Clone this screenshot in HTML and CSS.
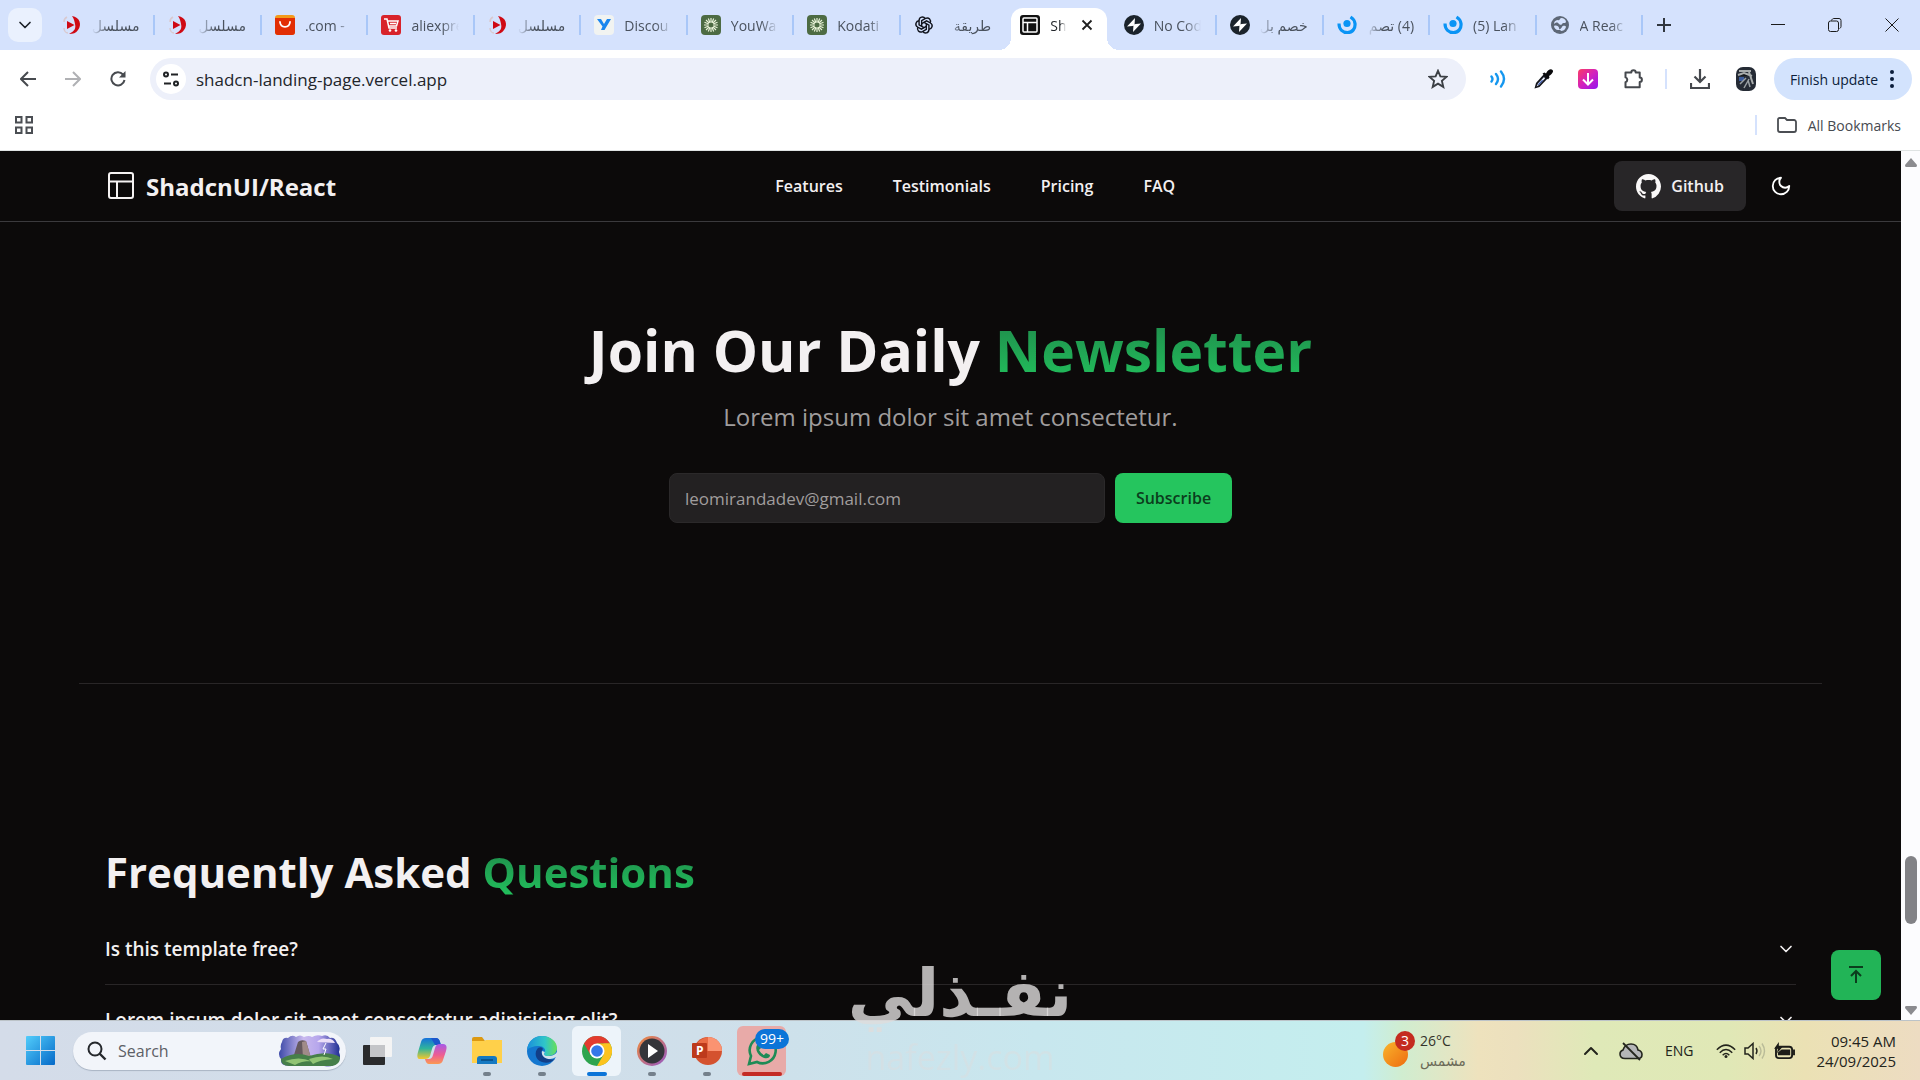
FILE: index.html
```html
<!DOCTYPE html>
<html lang="en">
<head>
<meta charset="utf-8">
<title>Shadcn - Landing template</title>
<link rel="stylesheet" href="styles.css">
</head>
<body>
<svg class="defs" aria-hidden="true">
  <symbol id="fav-play" viewBox="0 0 20 20"><path d="M5 2c-2 1-3 3-3 5M2 13c0 3 2 5 4 5" fill="none" stroke="#d9c9cf" stroke-width="1.500"/><path d="M10 1c8 1 10 9 6 14-2 3-5 4-9 4 6-3 7-6 6-10-.5-3-1-5-3-8z" fill="#cf0a14"/><path d="M5 6 12.500 10 5 14z" fill="#cf0a14"/></symbol>
  <symbol id="fav-green" viewBox="0 0 20 20"><rect width="20" height="20" rx="4" fill="#4d6b43"/><g stroke="#e9f2d8" stroke-width="1.200"><path d="M10 3v4.500M10 12.500V17M3 10h4.500M12.500 10H17M5 5l3.200 3.200M11.800 11.800 15 15M15 5l-3.200 3.200M8.200 11.800 5 15M7.300 3.500l1.700 4.200M11 12.300l1.700 4.200M12.700 3.500 11 7.700M9 12.300l-1.700 4.200M3.500 7.300 7.700 9M12.300 11l4.200 1.700M3.500 12.700 7.700 11M12.300 9l4.200-1.700"/></g></symbol>
  <symbol id="fav-bolt" viewBox="0 0 20 20"><circle cx="10" cy="10" r="10" fill="#1b232b"/><path d="M11 3 3 11.500l5.500-.5 2-1zM9 17l8-8.500-5.500.5-2 1z" fill="#fff"/></symbol>
  <symbol id="fav-ring" viewBox="0 0 20 20"><circle cx="10" cy="8.500" r="3.600" fill="#0a94f5"/><path d="M2 8.500c0 6 4 9 8.500 9 5 0 8-4 7.500-9-.4-3-2-5-4.500-6.500" fill="none" stroke="#0a94f5" stroke-width="3.200"/></symbol>
  <symbol id="chevron" viewBox="0 0 24 24"><path d="m6 9 6 6 6-6" fill="none" stroke="currentColor" stroke-width="2" stroke-linecap="round" stroke-linejoin="round"/></symbol>
</svg>

<header class="tabstrip">
  <button class="tab-search" aria-label="Search tabs"><svg width="20" height="20"><use href="#chevron"/></svg></button>
  <div class="tabs" role="tablist">
    <button class="tab" role="tab"><svg width="20" height="20"><use href="#fav-play"/></svg><span class="tab-label rtl" dir="rtl">مسلسل</span></button>
    <button class="tab" role="tab"><svg width="20" height="20"><use href="#fav-play"/></svg><span class="tab-label rtl" dir="rtl">مسلسل</span></button>
    <button class="tab" role="tab"><svg width="20" height="20" viewBox="0 0 20 20"><rect width="20" height="20" rx="3" fill="#f39a1b"/><path d="M0 3h20v14a3 3 0 0 1-3 3H3a3 3 0 0 1-3-3z" fill="#e22e05"/><path d="M5 7c.5 6.500 9.500 6.500 10 0" fill="none" stroke="#fff" stroke-width="1.800" stroke-linecap="round"/></svg><span class="tab-label">.com -</span></button>
    <button class="tab" role="tab"><svg width="20" height="20" viewBox="0 0 20 20"><rect width="20" height="20" rx="3" fill="#d8232b"/><path d="M3 4h3l2 9h8M7 6h10l-1.500 5H8M9 8.500h6" fill="none" stroke="#fff" stroke-width="1.500"/><circle cx="9" cy="15.500" r="1.300" fill="#fff"/><circle cx="15" cy="15.500" r="1.300" fill="#fff"/></svg><span class="tab-label">aliexpre</span></button>
    <button class="tab" role="tab"><svg width="20" height="20"><use href="#fav-play"/></svg><span class="tab-label rtl" dir="rtl">مسلسل</span></button>
    <button class="tab" role="tab"><svg width="20" height="20" viewBox="0 0 20 20"><rect width="20" height="20" rx="4" fill="#f1f3f1"/><path d="M3 4h4l3 5 3-5h4l-6.500 11H7l1.500-3.500z" fill="#1a86ee"/></svg><span class="tab-label">Discou</span></button>
    <button class="tab" role="tab"><svg width="20" height="20"><use href="#fav-green"/></svg><span class="tab-label">YouWa</span></button>
    <button class="tab" role="tab"><svg width="20" height="20"><use href="#fav-green"/></svg><span class="tab-label">Kodati</span></button>
    <button class="tab" role="tab"><svg width="20" height="20" viewBox="0 0 24 24"><g fill="none" stroke="#10131c" stroke-width="1.700"><path id="petal" d="M9.200 13.600V6.800l4.600-2.700c4-2 7.200 2 5.500 5.400"/><use href="#petal" transform="rotate(60 12 12)"/><use href="#petal" transform="rotate(120 12 12)"/><use href="#petal" transform="rotate(180 12 12)"/><use href="#petal" transform="rotate(240 12 12)"/><use href="#petal" transform="rotate(300 12 12)"/></g></svg><span class="tab-label rtl" dir="rtl">طريقة</span></button>
    <button class="tab active" role="tab" aria-selected="true"><svg width="20" height="20" viewBox="0 0 20 20"><rect width="20" height="20" rx="3" fill="#111"/><rect x="3" y="3" width="14" height="14" rx="1" fill="none" stroke="#fff" stroke-width="1.500"/><path d="M3 7.500h14M7.500 7.500V17" stroke="#fff" stroke-width="1.500"/></svg><span class="tab-label">Sha</span><svg class="close" width="12" height="12" viewBox="0 0 12 12"><path d="m1.500 1.500 9 9M10.500 1.500l-9 9" stroke="#1f1f1f" stroke-width="1.800"/></svg></button>
    <button class="tab" role="tab"><svg width="20" height="20"><use href="#fav-bolt"/></svg><span class="tab-label">No Cod</span></button>
    <button class="tab" role="tab"><svg width="20" height="20"><use href="#fav-bolt"/></svg><span class="tab-label rtl" dir="rtl">خصم بل</span></button>
    <button class="tab" role="tab"><svg width="20" height="20"><use href="#fav-ring"/></svg><span class="tab-label rtl" dir="rtl">(4) تصم</span></button>
    <button class="tab" role="tab"><svg width="20" height="20"><use href="#fav-ring"/></svg><span class="tab-label">(5) Lan</span></button>
    <button class="tab" role="tab"><svg width="20" height="20" viewBox="0 0 20 20"><circle cx="10" cy="10" r="9" fill="#5d6776"/><path d="M11 3c3 0 5 2 5 4-1 2-3 0-4 2s-3 0-4-1-3 0-4 1c0-3 2-4 4-4 2 1 1-1 3-2zM4 11c2-1 5 0 5 2s2 1 3-1 4-1 4 0c-1 3-3 4-5 4-1-2-2-1-3-1-2 0-4-2-4-4z" fill="#d5e2fd"/></svg><span class="tab-label">A Reac</span></button>
  </div>
  <button class="new-tab" aria-label="New tab"><svg width="14" height="14" viewBox="0 0 14 14"><path d="M7 0v14M0 7h14" stroke="#30363f" stroke-width="2"/></svg></button>
  <div class="window-controls">
    <button aria-label="Minimize"><svg width="14" height="14" viewBox="0 0 14 14"><path d="M0 6.500h14" stroke="#1b1b1b"/></svg></button>
    <button aria-label="Restore"><svg width="14" height="14" viewBox="0 0 14 14"><rect x=".5" y="3" width="10" height="10.500" rx="2" fill="none" stroke="#1b1b1b"/><path d="M3.500 2.500C4 1 5 .5 6 .5h5a2 2 0 0 1 2 2v6c0 1-1 2-1.500 2" fill="none" stroke="#1b1b1b"/></svg></button>
    <button aria-label="Close window"><svg width="14" height="14" viewBox="0 0 14 14"><path d="m.5.5 13 13M13.500.5l-13 13" stroke="#1b1b1b"/></svg></button>
  </div>
</header>

<div class="toolbar">
  <div class="nav-buttons">
    <button aria-label="Back"><svg width="16" height="16" viewBox="0 0 16 16"><path d="M16 8H1.500M8 1 1 8l7 7" fill="none" stroke="#474a4f" stroke-width="2"/></svg></button>
    <button aria-label="Forward"><svg width="16" height="16" viewBox="0 0 16 16"><path d="M0 8h14.500M8 1l7 7-7 7" fill="none" stroke="#b0b1b4" stroke-width="2"/></svg></button>
    <button aria-label="Reload"><svg width="16" height="16" viewBox="0 0 16 16"><path d="M14.500 9A6.600 6.600 0 1 1 13 3.500l1.500 1.700" fill="none" stroke="#474a4f" stroke-width="2"/><path d="M15.500 0v6.500H9z" fill="#474a4f"/></svg></button>
  </div>
  <div class="omnibox">
    <button class="site-info" aria-label="Site information"><svg width="16" height="16" viewBox="0 0 16 16"><g fill="none" stroke="#202225" stroke-width="2"><circle cx="3" cy="3.500" r="2"/><path d="M8 3.500h7M1 12.500h7"/><circle cx="13" cy="12.500" r="2"/></g></svg></button>
    <input type="text" aria-label="Address" value="shadcn-landing-page.vercel.app">
    <button aria-label="Bookmark this tab"><svg width="20" height="20" viewBox="0 0 20 20"><path d="m10 1.800 2.400 5.600 6.100.5-4.600 4 1.400 6-5.300-3.200-5.300 3.200 1.400-6-4.600-4 6.100-.5z" fill="none" stroke="#3c4045" stroke-width="1.900"/></svg></button>
  </div>
  <div class="extensions">
    <button aria-label="Sound waves"><svg width="18" height="18" viewBox="0 0 18 18"><path d="M1.500 6.500q2 2.500 0 5M6 4q4 5 0 10M11 1.500q6 7.500 0 15" fill="none" stroke="#1597ef" stroke-width="2.400" stroke-linecap="round"/></svg></button>
    <button aria-label="Color picker"><svg width="20" height="20" viewBox="0 0 20 20"><path d="m11 5 4 4-8.500 9-5 1.500L3 14z" fill="#11131a"/><path d="m11 8-6 6.500-1.500 3L6 16l6-6.500z" fill="#e8eefc"/><path d="m8.500 11.500-4 4.500 1.500-.3L10.500 11z" fill="#2f4ea8"/><path d="m9.500 4.500 2-1 1.500 1c2-4 5-5 6.500-3.500S19 5 16 7l.5 1.500-1.500 2z" fill="#0a0a0c"/></svg></button>
    <button aria-label="Downloader"><svg width="20" height="20" viewBox="0 0 20 20"><defs><linearGradient id="dl" x1="0" y1="0" x2="1" y2="1"><stop offset="0" stop-color="#fb3d63"/><stop offset=".5" stop-color="#d321bd"/><stop offset="1" stop-color="#9316f0"/></linearGradient></defs><rect width="20" height="20" rx="4" fill="url(#dl)"/><path d="M10 4v11M5 10.500l5 5 5-5" fill="none" stroke="#fff" stroke-width="2"/></svg></button>
    <button aria-label="Extensions"><svg width="22" height="22" viewBox="0 0 22 22"><path d="M2.500 4.500h5.800a2.200 2.200 0 0 1 4.400 0h4v5a2.200 2.200 0 0 1 0 4.400v5.300H2.500v-5a2.500 2.500 0 0 0 0-4.800z" fill="none" stroke="#45484d" stroke-width="2" stroke-linejoin="round"/></svg></button>
  </div>
  <span class="divider"></span>
  <button aria-label="Downloads"><svg width="20" height="20" viewBox="0 0 20 20"><path d="M10 0v12M4.500 7.500 10 13l5.500-5.500M1 14v5h18v-5" fill="none" stroke="#45484d" stroke-width="2.200"/></svg></button>
  <button class="avatar" aria-label="Profile"><svg width="20" height="24" viewBox="0 0 20 24"><rect width="20" height="24" rx="7" fill="#252b35"/><path d="M3 4h12M2 8l6-2 8 3M13 5l4 12" stroke="#a9adad" stroke-width="2"/><path d="M3 10h5v4H3z" fill="#3c5c9c"/><path d="m4 17 6-6M8 21l5-9M14 20l-2-7" stroke="#9aa0a4" stroke-width="1.500"/></svg></button>
  <button class="update">Finish update<svg width="4" height="20" viewBox="0 0 4 20"><g fill="#0b1d3a"><circle cx="2" cy="3" r="2"/><circle cx="2" cy="10" r="2"/><circle cx="2" cy="17" r="2"/></g></svg></button>
</div>

<div class="bookmarks">
  <button aria-label="Apps"><svg width="18" height="18" viewBox="0 0 18 18"><g fill="none" stroke="#4b4e53" stroke-width="2"><path d="M1 1h5.500v5.500H1zM11.500 1H17v5.500h-5.500zM1 11.500h5.500V17H1zM11.500 11.500H17V17h-5.500z"/></g></svg></button>
  <button class="all-bookmarks"><svg width="20" height="16" viewBox="0 0 20 16"><path d="M1 2.500V13a2 2 0 0 0 2 2h14a2 2 0 0 0 2-2V5a2 2 0 0 0-2-2h-7L8 1H2.500A1.500 1.500 0 0 0 1 2.500z" fill="none" stroke="#4b4e53" stroke-width="1.800"/></svg>All Bookmarks</button>
</div>

<div class="viewport">
  <div class="page">
    <div class="site-header">
      <a class="brand" href="#"><svg width="26" height="28" viewBox="0 0 26 28"><g fill="none" stroke="#f5f2f2" stroke-width="2"><rect x="1" y="1" width="24" height="25" rx="2"/><path d="M1 9.500h24M9 9.500V26"/></g></svg>ShadcnUI/React</a>
      <nav class="site-nav"><a href="#">Features</a><a href="#">Testimonials</a><a href="#">Pricing</a><a href="#">FAQ</a></nav>
      <div class="site-actions">
        <a class="github" href="#"><svg width="25" height="25" viewBox="0 0 16 16"><path fill="#faf8f8" d="M8 0C3.580 0 0 3.580 0 8c0 3.540 2.290 6.530 5.470 7.590.4.070.55-.17.55-.38 0-.19-.01-.82-.01-1.490-2.010.37-2.530-.49-2.690-.94-.09-.23-.48-.94-.82-1.130-.28-.15-.68-.52-.01-.53.63-.01 1.080.58 1.230.82.72 1.210 1.870.87 2.330.66.070-.52.280-.87.510-1.070-1.780-.2-3.640-.89-3.640-3.950 0-.87.310-1.590.82-2.150-.08-.2-.36-1.020.08-2.120 0 0 .67-.21 2.200.82.640-.18 1.320-.27 2-.27s1.360.09 2 .27c1.530-1.040 2.200-.82 2.200-.82.440 1.100.16 1.920.08 2.120.51.560.82 1.270.82 2.150 0 3.070-1.870 3.750-3.650 3.950.29.25.54.73.54 1.480 0 1.070-.01 1.930-.01 2.200 0 .21.15.46.55.38A8.010 8.010 0 0 0 16 8c0-4.420-3.580-8-8-8z"/></svg>Github</a>
        <button class="theme" aria-label="Toggle theme"><svg width="22" height="22" viewBox="0 0 24 24"><path d="M12 3a6 6 0 0 0 9 9 9 9 0 1 1-9-9Z" fill="none" stroke="#fff" stroke-width="2" stroke-linecap="round" stroke-linejoin="round"/></svg></button>
      </div>
    </div>
    <section class="newsletter">
      <h1>Join Our Daily <span class="accent">Newsletter</span></h1>
      <p>Lorem ipsum dolor sit amet consectetur.</p>
      <form class="signup"><input type="email" aria-label="Email" placeholder="leomirandadev@gmail.com"><button type="button">Subscribe</button></form>
    </section>
    <hr>
    <section class="faq">
      <h2>Frequently Asked <span class="accent">Questions</span></h2>
      <button class="question">Is this template free?<svg width="20" height="20"><use href="#chevron"/></svg></button>
      <button class="question">Lorem ipsum dolor sit amet consectetur adipisicing elit?<svg width="20" height="20"><use href="#chevron"/></svg></button>
    </section>
    <button class="to-top" aria-label="Scroll to top"><svg width="20" height="20" viewBox="0 0 20 20"><path d="M3 2h14M10 18V6M5 11l5-5 5 5" fill="none" stroke="#0b3d1d" stroke-width="2"/></svg></button>
  </div>
  <div class="scrollbar">
    <svg width="12" height="9" viewBox="0 0 12 9"><path d="M6 0 12 7q0 2-1 2H1q-1 0-1-2z" fill="#8b8b8f"/></svg>
    <span class="thumb"></span>
    <svg width="12" height="9" viewBox="0 0 12 9"><path d="M6 9 0 2Q0 0 1 0h10q1 0 1 2z" fill="#8b8b8f"/></svg>
  </div>
</div>

<footer class="taskbar">
  <button class="start" aria-label="Start"><svg width="29" height="29" viewBox="0 0 29 29"><defs><linearGradient id="win" x1="0" y1="0" x2="1" y2="1"><stop offset="0" stop-color="#52cdfb"/><stop offset="1" stop-color="#0569c8"/></linearGradient></defs><path d="M0 1q0-1 1-1h13v14H0zM15 0h13q1 0 1 1v13H15zM0 15h14v14H1q-1 0-1-1zM15 15h14v13q0 1-1 1H15z" fill="url(#win)"/></svg></button>
  <label class="search"><svg width="20" height="20" viewBox="0 0 20 20"><circle cx="8" cy="8" r="6.500" fill="none" stroke="#25282c" stroke-width="2"/><path d="m12.500 12.500 6 6" stroke="#25282c" stroke-width="2.400"/></svg><input type="text" placeholder="Search" aria-label="Search">
    <svg width="62" height="32" viewBox="0 0 62 32"><defs><linearGradient id="sky" x1="0" x2="1"><stop offset="0" stop-color="#3d4aa8"/><stop offset=".4" stop-color="#c9b9ee"/><stop offset=".65" stop-color="#b6a6ec"/><stop offset="1" stop-color="#1f2e93"/></linearGradient></defs><path d="M3 7q1-5 6-4 4-4 8-1 4-3 8 0 5-2 8 0 5-3 10-1 5-2 8 2 5-1 7 5 4 3 2 9 3 8-3 11-4 5-12 3H10Q1 31 2 24q-4-5 0-10-1-4 1-7z" fill="url(#sky)"/><path d="m14 23 5-16q3-3 8-1l5 17z" fill="#65595e"/><path d="m24 23-1-16 4-1 5 17z" fill="#a08b88"/><path d="M2 24q14-8 28-3 18-6 31 1 0 8-8 9H10Q2 31 2 24z" fill="#467f49"/><path d="M6 26q14-5 26 0-10 0-16 4M30 24q14-5 24 0-14 1-20 5" fill="#91c474"/><path d="M38 7q4-5 10-3 5-1 8 4z" fill="#ecdff8"/><path d="m47 8-3 6h3l-2 6" fill="none" stroke="#fff"/></svg></label>
  <div class="apps">
    <button class="app" aria-label="Task view"><svg width="30" height="30" viewBox="0 0 30 30"><rect x="1" y="9" width="22" height="20" rx="1" fill="#2a2b2d"/><rect x="8" y="1" width="22" height="20" rx="1" fill="#f4f4f4"/><path d="M8 9h15v12H8z" fill="#c4c5c8"/></svg></button>
    <button class="app" aria-label="Copilot"><svg width="30" height="30" viewBox="0 0 30 30"><defs><linearGradient id="cpa" x1="0" y1="0" x2="0" y2="1"><stop offset="0" stop-color="#1671dc"/><stop offset=".5" stop-color="#2fb49b"/><stop offset="1" stop-color="#f5c82c"/></linearGradient><linearGradient id="cpb" x1="0" y1="0" x2="0" y2="1"><stop offset="0" stop-color="#a55ae8"/><stop offset=".55" stop-color="#ee5d92"/><stop offset="1" stop-color="#fb9a52"/></linearGradient></defs><path d="M9 2h10q3 0 4 4l1 3h-5q-3 0-4 4l-2 7q-1 3-5 3H3q-4 0-2-7L4 6q1-4 5-4z" fill="url(#cpa)"/><path d="M14 2h5q3 0 4 4l1 3h-6z" fill="#1c57cc"/><path d="M21 28H12q-3 0-4-5h4q3 0 4-4l2-7q1-4 5-4h3q5 0 3 7l-3 9q-1 4-5 4z" fill="url(#cpb)"/></svg></button>
    <button class="app running" aria-label="File Explorer"><svg width="30" height="30" viewBox="0 0 30 30"><path d="M0 3q0-2 2-2h8l3 4H0z" fill="#dc9912"/><path d="M0 5h12l2-1h16v23H0z" fill="#ffd04a"/><path d="M5 28v-5q0-3 3-3h14q3 0 3 3v5z" fill="#1579c2"/><path d="M9 24h12" stroke="#0b5590" stroke-width="2"/></svg></button>
    <button class="app running" aria-label="Edge"><svg width="30" height="30" viewBox="0 0 30 30"><defs><linearGradient id="edge" x1="0" y1="0" x2="1" y2="0"><stop offset="0" stop-color="#1a8fdc"/><stop offset=".6" stop-color="#30c6c8"/><stop offset="1" stop-color="#67df57"/></linearGradient></defs><circle cx="15" cy="15" r="15" fill="#1477cf"/><path d="M0 14C1 5 7 0 15 0c9 0 15 6 15 12 0 5-4 8-9 8-4 0-5-2-3-4 1-3-2-6-6-6-6 0-10 2-12 4z" fill="url(#edge)"/><path d="M11 12c-4 4-3 12 4 14 5 2 10 0 13-3-3 1-9 1-12-3-2-3-2-5 0-7-1-2-3-2-5-1z" fill="#123f88"/><path d="M15 15c-1 5 3 8 8 8 2 0 4-1 6-2l2-1v-6c-2 5-6 6-10 6-4 0-5-2-3-4z" fill="#d1e1eb"/></svg></button>
    <button class="app running current" aria-label="Chrome"><svg width="30" height="30" viewBox="0 0 30 30"><circle cx="15" cy="15" r="15" fill="#2da44e"/><path d="M2 7.500A15 15 0 0 1 28 7.500H15L8.500 18.800z" fill="#e33b2e"/><path d="M28 7.500A15 15 0 0 1 15 30l6.500-11.200V7.500z" fill="#fcc31e"/><path d="M15 7.500h13l-7 9z" fill="#fcc31e"/><circle cx="15" cy="15" r="7.500" fill="#fff"/><circle cx="15" cy="15" r="5.800" fill="#3578e8"/></svg></button>
    <button class="app running" aria-label="Media Player"><svg width="30" height="30" viewBox="0 0 30 30"><defs><linearGradient id="med" x1="0" y1="0" x2="1" y2="1"><stop offset="0" stop-color="#f28b38"/><stop offset="1" stop-color="#9357c7"/></linearGradient></defs><circle cx="15" cy="15" r="15" fill="url(#med)"/><circle cx="15" cy="15" r="12.500" fill="#34353a"/><path d="m11 8 10 7-10 7z" fill="#fff"/></svg></button>
    <button class="app running" aria-label="PowerPoint"><svg width="30" height="30" viewBox="0 0 30 30"><circle cx="16" cy="15" r="14" fill="#d4522f"/><path d="M16 1a14 14 0 0 1 14 14H16z" fill="#fb9371"/><path d="M16 1v14H3Q4 3 16 1z" fill="#ea6c45"/><rect y="7" width="15" height="15" rx="1" fill="#bd3a1c"/><text x="4" y="19" class="ppt">P</text></svg></button>
    <button class="app alert" aria-label="WhatsApp"><svg width="32" height="32" viewBox="0 0 32 32"><path d="M3 29 5 21A13 13 0 1 1 11 27z" fill="none" stroke="#1f8b56" stroke-width="2.600"/><path d="M11 10c1-2 3-1 3 1l1 2-2 2q2 4 5 5l2-2 4 2c0 4-5 4-8 2-5-3-7-8-5-12z" fill="#1f8b56"/></svg><span class="badge">99+</span></button>
  </div>
  <button class="weather"><span class="sun"><span class="count">3</span></span><span class="weather-text"><span>26°C</span><span class="cond" lang="ar">مشمس</span></span></button>
  <div class="tray">
    <button aria-label="Show hidden icons"><svg class="flip" width="24" height="24"><use href="#chevron"/></svg></button>
    <button aria-label="Cloud sync off"><svg width="24" height="20" viewBox="0 0 24 20"><path d="M6 17.500q-5 0-5-4.500 0-3 3-4Q6 3 12 3t7 6q4 1 4 4.500 0 4-4 4z" fill="#b5b6b8" stroke="#23251d" stroke-width="1.600"/><path d="m4 2 17 17" stroke="#23251d" stroke-width="1.800"/></svg></button>
    <button class="lang">ENG</button>
    <button class="status" aria-label="Network, sound and battery">
      <svg width="20" height="16" viewBox="0 0 24 18"><g fill="none" stroke="#23241c" stroke-width="1.800"><path d="M1 7.500q11-11 22 0M4.500 11q7.500-7.500 15 0M8 14q4-4 8 0"/></g><circle cx="12" cy="15.500" r="1.800" fill="#23241c"/></svg>
      <svg width="22" height="18" viewBox="0 0 22 18"><path d="M1 6h3l5-4.500v15L4 12H1z" fill="none" stroke="#23241c" stroke-width="1.500"/><path d="M12 6q2 3 0 6" fill="none" stroke="#23241c" stroke-width="1.400"/><path d="M15 4q4 5 0 10M18 1.500q5 7.500 0 15" fill="none" stroke="#b9bb98" stroke-width="1.400"/></svg>
      <svg width="22" height="18" viewBox="0 0 23 19"><rect x="2" y="5" width="17" height="12" rx="3" fill="none" stroke="#1c1c18" stroke-width="2"/><path d="M8 8h9v6H4v-3z" fill="#1c1c18"/><path d="M20 8h2v6h-2zM5 0 0 7h4l-1 5 6-7H5z" fill="#1c1c18"/></svg>
    </button>
    <button class="clock"><span>09:45 AM</span><span>24/09/2025</span></button>
  </div>
</footer>
<div class="watermark" aria-hidden="true"><span class="wm-ar" lang="ar" dir="rtl">نفـذلي</span><span class="wm-en">nafezly.com</span></div>
</body>
</html>
```
FILE: styles.css
```css
* { box-sizing: border-box; }
body {
  margin: 0;
  height: 100vh;
  display: flex;
  flex-direction: column;
  overflow: hidden;
  position: relative;
  background: #fff;
  font-family: "Open Sans", "Noto Sans", "DejaVu Sans", sans-serif;
}
button { border: 0; padding: 0; background: none; font: inherit; color: inherit; display: flex; align-items: center; justify-content: center; }
input { border: 0; padding: 0; background: none; font: inherit; outline: 0; min-width: 0; }
a { color: inherit; text-decoration: none; }
svg { display: block; flex: none; }
.defs { position: absolute; width: 0; height: 0; }

/* Tab strip */
.tabstrip { flex: none; height: 50px; display: flex; align-items: center; background: #d5e2fd; }
.tab-search { width: 34px; height: 34px; margin: 0 7px 0 8px; border-radius: 10px; background: #eaf1fe; color: #1b2027; }
.tabs { flex: 1; display: flex; height: 50px; }
.tab { flex: 1 1 0; min-width: 0; height: 50px; padding: 0 16px 0 13px; gap: 10px; position: relative; font-size: 14px; color: #4a525e; justify-content: flex-start; }
.tab::after { content: ""; position: absolute; right: 0; top: 15px; width: 2px; height: 20px; background: #a9c7f8; }
.tab:has(+ .active)::after, .tab.active::after { background: none; }
.tab-label { flex: 1; overflow: hidden; white-space: nowrap; text-align: left; -webkit-mask-image: linear-gradient(to right, #000 65%, transparent); mask-image: linear-gradient(to right, #000 65%, transparent); }
.tab-label.rtl { text-align: right; -webkit-mask-image: linear-gradient(to left, #000 65%, transparent); mask-image: linear-gradient(to left, #000 65%, transparent); }
.tab.active { padding-right: 13px; color: #1f2328; }
.tab.active::before { content: ""; position: absolute; left: 4px; right: 4px; top: 8px; bottom: 0; background: #fff; border-radius: 12px 12px 0 0; }
.tab.active > * { position: relative; }
.tab.active::after { left: -8px; right: -8px; top: 38px; width: auto; height: 12px; background: radial-gradient(circle at 0 0, transparent 12px, #fff 12px) left / 12px 12px no-repeat, radial-gradient(circle at 100% 0, transparent 12px, #fff 12px) right / 12px 12px no-repeat; }
.tab .close { margin: 0 5px; }
.new-tab { width: 42px; height: 34px; }
.window-controls { display: flex; margin-left: 64px; }
.window-controls button { width: 57px; height: 50px; }

/* Toolbar */
.toolbar { flex: none; height: 58px; display: flex; align-items: center; padding: 0 8px 0 5px; }
.nav-buttons { display: flex; }
.nav-buttons button { width: 45px; height: 42px; }
.omnibox { flex: 1; height: 42px; margin-left: 10px; padding: 0 18px 0 6px; display: flex; align-items: center; gap: 10px; background: #edf0fa; border-radius: 21px; }
.site-info { width: 30px; height: 30px; border-radius: 50%; background: #fff; }
.omnibox input { flex: 1; font-size: 17px; color: #22252a; }
.extensions { display: flex; gap: 25px; margin-left: 24px; }
.divider { width: 2px; height: 20px; margin: 0 23px 0 20px; background: #d5e2fd; }
.avatar { margin: 0 18px 0 26px; }
.update { height: 42px; padding: 0 18px 0 16px; gap: 12px; border-radius: 21px; background: #d3e3fd; font-size: 14px; color: #0b1d3a; }

/* Bookmarks bar */
.bookmarks { flex: none; height: 43px; padding: 0 19px 8px 15px; display: flex; align-items: center; justify-content: space-between; border-bottom: 1px solid #dfe3e3; }
.all-bookmarks { height: 20px; padding-left: 20px; gap: 11px; border-left: 2px solid #d5e2fd; font-size: 14px; color: #474a50; }

/* Page area */
.viewport { flex: 1; min-height: 0; display: flex; overflow: hidden; }
.page { flex: 1; min-width: 0; position: relative; overflow: hidden; background: #0c0a0a; color: #f3f0f1; }
.site-header { height: 71px; padding: 0 109px 0 108px; display: flex; justify-content: space-between; align-items: center; border-bottom: 1px solid #3b3a3d; }
.brand { display: flex; align-items: center; gap: 12px; font-size: 24px; font-weight: 700; }
.site-nav { display: flex; gap: 50px; font-size: 16px; font-weight: 600; }
.site-actions { display: flex; align-items: center; gap: 24px; }
.github { display: flex; align-items: center; gap: 10px; height: 50px; padding: 0 22px; border-radius: 8px; background: #282628; font-size: 16px; font-weight: 600; }
.newsletter { padding: 98px 0 160px; display: flex; flex-direction: column; align-items: center; }
h1, h2, p { margin: 0; }
h1 { font-size: 57px; line-height: 60px; font-weight: 700; }
.accent { background: linear-gradient(#1f8449, #22c55e); -webkit-background-clip: text; background-clip: text; color: transparent; }
.newsletter p { margin-top: 19px; font-size: 24px; line-height: 36px; color: #a09d9d; }
.signup { display: flex; gap: 10px; margin-top: 38px; height: 50px; }
.signup input { width: 436px; padding: 0 15px; border: 1px solid #2b292a; border-radius: 8px; background: #232122; font-size: 17px; color: #f3f0f1; }
.signup input::placeholder { color: #a09d9d; opacity: 1; }
.signup button { width: 117px; border-radius: 8px; background: #25c55e; color: #0b3d1d; font-size: 16px; font-weight: 600; }
hr { height: 1px; margin: 0 79px; border: 0; background: #292627; }
.faq { padding: 163px 105px 0; }
h2 { font-size: 42px; line-height: 50px; margin-bottom: 17px; }
.question { width: 100%; height: 71px; border-bottom: 1px solid #292627; justify-content: space-between; font-size: 19px; font-weight: 600; }
.to-top { position: absolute; right: 20px; bottom: 20px; width: 50px; height: 50px; border-radius: 8px; background: #22b457; }
.scrollbar { width: 19px; padding: 7px 0 5px; display: flex; flex-direction: column; align-items: center; background: #fcfcfe; }
.thumb { width: 12px; height: 68px; margin: auto 0 82px; border-radius: 6px; background: #828286; }

/* Taskbar */
.taskbar { flex: none; height: 60px; padding: 0 24px 0 26px; display: flex; align-items: center; border-top: 1px solid #bcc3c8; color: #23241c; font-size: 15px;
  background: linear-gradient(to right, #d4dce9 0%, #cfdfea 37%, #c8e7ee 54%, #c4eeee 71%, #d0edd0 73%, #eee2bd 77%, #ece0be 79%, #dfe9b8 83%, #e0e8b6 90%, #ebe1b4 94%, #eddcc2 100%); }
.search { width: 273px; height: 38px; margin: 0 3px 0 18px; padding: 0 5px 0 14px; display: flex; align-items: center; gap: 11px; border-radius: 19px; background: #f2f5fa; box-shadow: 0 1px 1px #a9b4c4; }
.search input { flex: 1; font-size: 16px; }
.search input::placeholder { color: #5d6066; opacity: 1; }
.apps { display: flex; }
.app { width: 55px; height: 50px; position: relative; border-radius: 6px; }
.app.running::after { content: ""; position: absolute; bottom: 0; width: 8px; height: 4px; border-radius: 2px; background: #74808b; }
.app.current::before, .app.alert::before { content: ""; position: absolute; left: 3px; right: 3px; top: 0; bottom: 0; border-radius: 6px; background: #edf4fa; }
.app.alert::before { background: #e8aaa8; }
.app svg { position: relative; }
.app.current::after { width: 20px; background: #0b74d8; }
.app.alert::after { content: ""; position: absolute; bottom: 0; width: 40px; height: 4px; border-radius: 2px; background: #c42b25; }
.badge { position: absolute; left: 21px; top: 3px; width: 34px; height: 20px; border-radius: 10px; background: #0b74d8; color: #fff; font-size: 14px; line-height: 20px; text-align: center; }
.ppt { font-size: 12px; font-weight: 700; fill: #fff; }
.weather { margin-left: auto; gap: 5px; color: #33332a; }
.sun { position: relative; width: 32px; height: 40px; }
.sun::before { content: ""; position: absolute; left: 0; top: 11px; width: 25px; height: 25px; border-radius: 50%; background: linear-gradient(135deg, #f9b52c, #ee6b10); }
.count { position: absolute; left: 12px; top: 0; width: 20px; height: 20px; border-radius: 50%; background: #c42b20; color: #fff; font-size: 14px; line-height: 20px; text-align: center; }
.weather-text { display: flex; flex-direction: column; align-items: flex-start; font-size: 14px; line-height: 20px; }
.cond { color: #6b6a58; }
.tray { display: flex; align-items: center; margin-left: 113px; }
.tray button + button { margin-left: 16px; }
.flip { transform: scaleY(-1); }
.tray .lang.lang { margin-left: 22px; font-size: 14px; }
.tray .status.status { gap: 8px; margin-left: 23px; }
.tray .clock.clock { flex-direction: column; align-items: flex-end; margin-left: 20px; font-size: 15px; line-height: 20px; }

/* Translucent channel logo over the desktop */
.watermark { position: absolute; left: 50%; bottom: 0; transform: translateX(-50%); display: flex; flex-direction: column; align-items: center; color: rgba(222, 220, 220, .8); pointer-events: none; }
.wm-ar { font: bold 66px/80px "DejaVu Sans", sans-serif; white-space: nowrap; }
.wm-en { font-size: 34px; line-height: 46px; opacity: .5; }
```
